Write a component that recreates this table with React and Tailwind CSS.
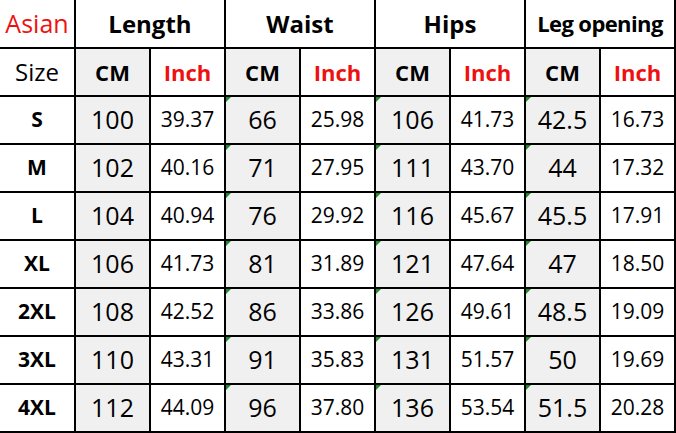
const rows = [
  ["S", "100", "39.37", "66", "25.98", "106", "41.73", "42.5", "16.73"],
  ["M", "102", "40.16", "71", "27.95", "111", "43.70", "44", "17.32"],
  ["L", "104", "40.94", "76", "29.92", "116", "45.67", "45.5", "17.91"],
  ["XL", "106", "41.73", "81", "31.89", "121", "47.64", "47", "18.50"],
  ["2XL", "108", "42.52", "86", "33.86", "126", "49.61", "48.5", "19.09"],
  ["3XL", "110", "43.31", "91", "35.83", "131", "51.57", "50", "19.69"],
  ["4XL", "112", "44.09", "96", "37.80", "136", "53.54", "51.5", "20.28"],
];

const Marker = () => (
  <span className="absolute left-0 top-0 w-0 h-0 border-t-[5px] border-r-[5px] border-t-[#1e8a2a] border-r-transparent" />
);

const Cell = ({ children, className = "" }) => (
  <div className={`relative flex items-center justify-center ${className}`}>{children}</div>
);

export default function App() {
  return (
    <div
      className="w-[676px] h-[433px] bg-black pr-[2px] pb-[2px] grid grid-cols-[74px_repeat(8,73px)] grid-rows-[47px_repeat(8,46px)] gap-[2px] text-black"
      style={{ fontFamily: '"Open Sans", "Noto Sans", sans-serif' }}
    >
      <Cell className="bg-white text-[25px] text-[#ee1111]">Asian</Cell>
      <Cell className="bg-white col-span-2 text-[24px] font-bold">Length</Cell>
      <Cell className="bg-white col-span-2 text-[24px] font-bold">Waist</Cell>
      <Cell className="bg-white col-span-2 text-[24px] font-bold">Hips</Cell>
      <Cell className="bg-white col-span-2 text-[22px] font-bold tracking-[-0.6px]">Leg opening</Cell>

      <Cell className="bg-white text-[24px]">Size</Cell>
      {[0, 1, 2, 3].map(i => (
        <div key={i} className="contents">
          <Cell className="bg-[#f0f0f0] text-[22px] font-bold">CM</Cell>
          <Cell className="bg-white text-[22px] font-bold text-[#ee1111]">Inch</Cell>
        </div>
      ))}

      {rows.map(r => (
        <div key={r[0]} className="contents">
          <Cell className="bg-white text-[21px] font-bold">{r[0]}</Cell>
          {r.slice(1).map((v, j) => (
            <Cell
              key={j}
              className={j % 2 === 0 ? "bg-[#f0f0f0] text-[25px]" : "bg-white text-[21px]"}
            >
              {(j === 2 || j === 4 || j === 6) && <Marker />}
              {v}
            </Cell>
          ))}
        </div>
      ))}
    </div>
  );
}
